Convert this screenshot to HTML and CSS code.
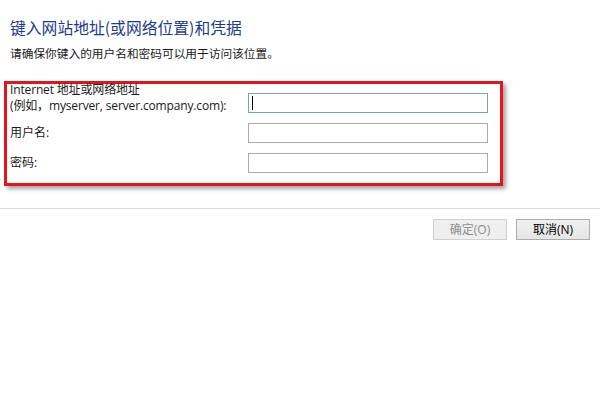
FILE: index.html
```html
<!DOCTYPE html>
<html lang="zh-CN">
<head>
<meta charset="utf-8">
<title>键入网站地址和凭据</title>
<link rel="stylesheet" href="styles.css">
</head>
<body>
<div class="dialog">
  <div class="header">
    <h1 class="title">键入网站地址(或网络位置)和凭据</h1>
    <p class="subtitle">请确保你键入的用户名和密码可以用于访问该位置。</p>
  </div>
  <div class="highlight">
    <div class="row row-first">
      <label class="label">Internet 地址或网络地址<br>(例如，myserver, server.company.com):</label>
      <div class="field field-focus"><span class="caret"></span></div>
    </div>
    <div class="row">
      <label class="label">用户名:</label>
      <div class="field"></div>
    </div>
    <div class="row">
      <label class="label">密码:</label>
      <div class="field"></div>
    </div>
  </div>
  <div class="separator"></div>
  <div class="buttons">
    <button class="btn btn-disabled">确定(O)</button>
    <button class="btn">取消(N)</button>
  </div>
</div>
</body>
</html>
```

FILE: styles.css
```css
html, body {
  margin: 0;
  padding: 0;
  background: #ffffff;
}

body {
  width: 600px;
  height: 400px;
  overflow: hidden;
  font-family: "Open Sans", "Noto Sans CJK SC", sans-serif;
  font-size: 12px;
  color: #1a1a1a;
}

.header {
  padding: 18px 0 0 10px;
}

.title {
  margin: 0;
  font-family: "Noto Sans CJK SC", sans-serif;
  font-weight: normal;
  font-size: 15.8px;
  line-height: 20px;
  color: #1c3a90;
}

.subtitle {
  margin: 7px 0 0 0;
  font-family: "Noto Sans CJK SC", sans-serif;
  font-size: 11.7px;
  line-height: 16px;
  color: #1a1a1a;
}

.highlight {
  box-sizing: border-box;
  width: 499px;
  margin: 20px 0 0 4px;
  padding: 0 0 10px 3px;
  border: 3px solid #e3141b;
  box-shadow: 3px 3px 4px rgba(0, 0, 0, 0.35);
  display: flex;
  flex-direction: column;
  gap: 10px;
}

.row {
  display: flex;
  align-items: center;
  height: 20px;
}

.row-first {
  height: 32px;
  margin-top: -2px;
  margin-bottom: -1px;
  align-items: flex-end;
}

.label {
  width: 238px;
  line-height: 16px;
  white-space: nowrap;
}

.row-first .label {
  align-self: flex-start;
  letter-spacing: -0.15px;
}

.row-first .field {
  margin-bottom: 1px;
}

.field {
  box-sizing: border-box;
  width: 240px;
  height: 20px;
  border: 1px solid #acacac;
  background: #ffffff;
  display: flex;
  align-items: center;
  padding-left: 3px;
}

.field-focus {
  border-color: #7a9fc4;
}

.caret {
  display: block;
  width: 1px;
  height: 14px;
  background: #000000;
}

.separator {
  margin-top: 22px;
  height: 1px;
  background: #dcdcdc;
}

.buttons {
  display: flex;
  justify-content: flex-end;
  gap: 9px;
  padding: 10px 10px 0 0;
}

.btn {
  box-sizing: border-box;
  width: 74px;
  height: 21px;
  margin: 0;
  padding: 0;
  border: 1px solid #acacac;
  background: linear-gradient(#f0f0f0, #e5e5e5);
  font-family: "Open Sans", "Noto Sans CJK SC", sans-serif;
  font-size: 12px;
  line-height: 19px;
  color: #000000;
}

.btn-disabled {
  border-color: #d0d0d0;
  background: #efefef;
  color: #8d8d8d;
}
```
